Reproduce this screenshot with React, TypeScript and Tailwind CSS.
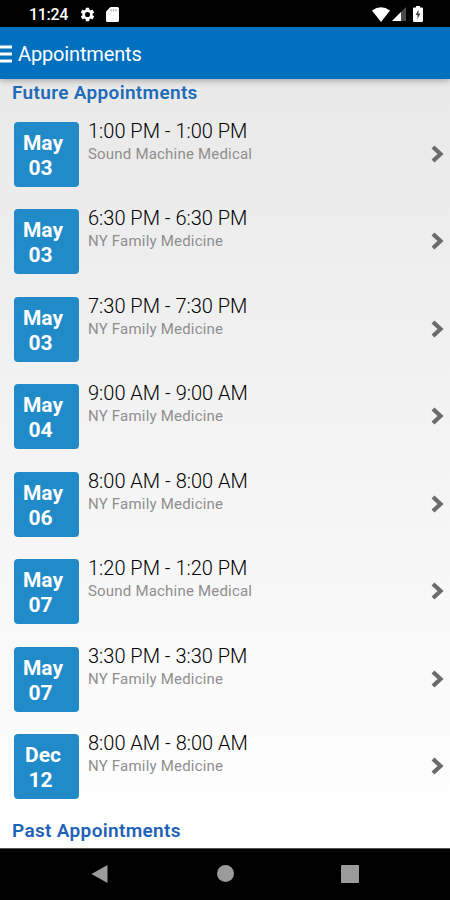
type Appointment = {
  month: string
  day: string
  time: string
  place: string
}

const future: Appointment[] = [
  { month: "May", day: "03", time: "1:00 PM - 1:00 PM", place: "Sound Machine Medical" },
  { month: "May", day: "03", time: "6:30 PM - 6:30 PM", place: "NY Family Medicine" },
  { month: "May", day: "03", time: "7:30 PM - 7:30 PM", place: "NY Family Medicine" },
  { month: "May", day: "04", time: "9:00 AM - 9:00 AM", place: "NY Family Medicine" },
  { month: "May", day: "06", time: "8:00 AM - 8:00 AM", place: "NY Family Medicine" },
  { month: "May", day: "07", time: "1:20 PM - 1:20 PM", place: "Sound Machine Medical" },
  { month: "May", day: "07", time: "3:30 PM - 3:30 PM", place: "NY Family Medicine" },
  { month: "Dec", day: "12", time: "8:00 AM - 8:00 AM", place: "NY Family Medicine" },
]

function StatusBar() {
  return (
    <div className="flex h-[27px] shrink-0 items-center bg-black pl-[29px] pr-[27px] pt-px text-white">
      <span className="w-[50px] whitespace-nowrap pt-px text-[16px] font-medium leading-none tracking-[-0.3px]">11:24</span>
      <svg viewBox="0 0 24 24" className="size-[17px]" fill="currentColor">
        <path d="M19.14 12.94c.04-.3.06-.61.06-.94s-.02-.64-.07-.94l2.03-1.58a.49.49 0 0 0 .12-.61l-1.92-3.32a.49.49 0 0 0-.59-.22l-2.39.96a7 7 0 0 0-1.62-.94l-.36-2.54a.48.48 0 0 0-.48-.41h-3.84a.47.47 0 0 0-.47.41l-.36 2.54c-.59.24-1.13.57-1.62.94l-2.39-.96a.48.48 0 0 0-.59.22L2.74 8.87a.47.47 0 0 0 .12.61l2.03 1.58a7 7 0 0 0 0 1.88l-2.03 1.58a.49.49 0 0 0-.12.61l1.92 3.32c.12.22.37.29.59.22l2.39-.96c.5.38 1.03.7 1.62.94l.36 2.54c.05.24.24.41.48.41h3.84c.24 0 .44-.17.47-.41l.36-2.54a7 7 0 0 0 1.62-.94l2.39.96c.22.08.47 0 .59-.22l1.92-3.32a.47.47 0 0 0-.12-.61zM12 15.6a3.6 3.6 0 1 1 0-7.2 3.6 3.6 0 0 1 0 7.2z" />
      </svg>
      <svg viewBox="0 0 13 15" className="ml-[10px] h-[15px] w-[13px]">
        <path d="M4.5 0H11.5Q13 0 13 1.500V13.500Q13 15 11.500 15H1.500Q0 15 0 13.500V4.500Z" fill="currentColor" />
        <path d="M5 2v2.600M7.500 2v2.600M10 2v2.600" stroke="#b0b0b0" strokeWidth="1.200" />
      </svg>
      <div className="ml-auto flex items-center">
        <svg viewBox="0 0 18 15" className="h-[15px] w-[18px]">
          <path d="M0 3.500Q9-3 18 3.500L9 15Z" fill="currentColor" />
        </svg>
        <svg viewBox="0 0 14 14" className="ml-[2px] h-[14px] w-[14px]">
          <path d="M0 14L14 0V14Z" fill="#4a4a4a" />
          <path d="M0 14L9 5V14Z" fill="currentColor" />
        </svg>
        <svg viewBox="0 0 10 16" className="ml-[7px] h-[16px] w-[10px]">
          <path d="M3 0H7V1.500H9Q10 1.500 10 2.500V15Q10 16 9 16H1Q0 16 0 15V2.500Q0 1.500 1 1.500H3Z" fill="currentColor" />
          <path d="M5.500 3.800L2.500 9H4.500V13L7.500 7.500H5.500Z" fill="#444" />
        </svg>
      </div>
    </div>
  )
}

function Header() {
  return (
    <header className="z-10 flex h-[52px] shrink-0 items-center bg-[#0070bf] text-white shadow-[0_1px_7px_rgba(0,0,0,0.35)]">
      <svg viewBox="0 0 12 18" className="mt-[2px] h-[18px] w-[12px]">
        <path d="M0 2H12M0 9H12M0 16H12" stroke="currentColor" strokeWidth="3" />
      </svg>
      <h1 className="ml-[6px] mt-[2px] text-[20px] leading-none tracking-[-0.15px]">Appointments</h1>
    </header>
  )
}

function AppointmentRow({ month, day, time, place }: Appointment) {
  return (
    <li className="flex h-[87.5px] pl-[14px] pr-[6px]">
      <div className="flex size-[65px] flex-col rounded-[4px] bg-[#208bc8] pr-[7px] pt-[9px] text-center text-[21px] font-bold leading-[25px] text-white">
        <span>{month}</span>
        <span className="pr-[5px]">{day}</span>
      </div>
      <div className="ml-[9px] flex-1">
        <p className="text-[20px] font-light leading-[18px] text-black">{time}</p>
        <p className="mt-[5px] text-[15px] leading-[18px] tracking-[0.2px] text-[#8f8f8f]">{place}</p>
      </div>
      <svg viewBox="0 0 13 18" className="mt-[23px] h-[18px] w-[13px]">
        <path d="M2 2L9.500 9L2 16" fill="none" stroke="#6b6b6b" strokeWidth="4.200" />
      </svg>
    </li>
  )
}

function NavBar() {
  return (
    <nav className="flex h-[52px] shrink-0 items-center justify-between border-t border-[#555] bg-black px-[91px] pb-[2px] text-[#9b9b9b]">
      <svg viewBox="0 0 18 18" className="size-[18px]" fill="currentColor">
        <path d="M16.500 0V18L0.500 9Z" />
      </svg>
      <div className="size-[17px] rounded-full bg-[#9b9b9b]" />
      <div className="size-[18px] rounded-[1px] bg-[#9b9b9b]" />
    </nav>
  )
}

export default function App() {
  return (
    <div className="flex h-[900px] w-[450px] flex-col overflow-hidden bg-black font-['Roboto',sans-serif]">
      <StatusBar />
      <Header />
      <main className="min-h-0 flex-1 overflow-hidden bg-linear-to-b from-[#e9e9e9] to-white">
        <h2 className="h-[42.75px] pl-[12px] pt-[4px] text-[19px] font-semibold leading-[20px] tracking-[0.33px] text-[#1e6bb8]">
          Future Appointments
        </h2>
        <ul>
          {future.map((item, i) => (
            <AppointmentRow key={i} {...item} />
          ))}
        </ul>
        <h2 className="pl-[12px] text-[19px] font-semibold leading-[18px] tracking-[0.33px] text-[#1e62b8]">Past Appointments</h2>
      </main>
      <NavBar />
    </div>
  )
}
